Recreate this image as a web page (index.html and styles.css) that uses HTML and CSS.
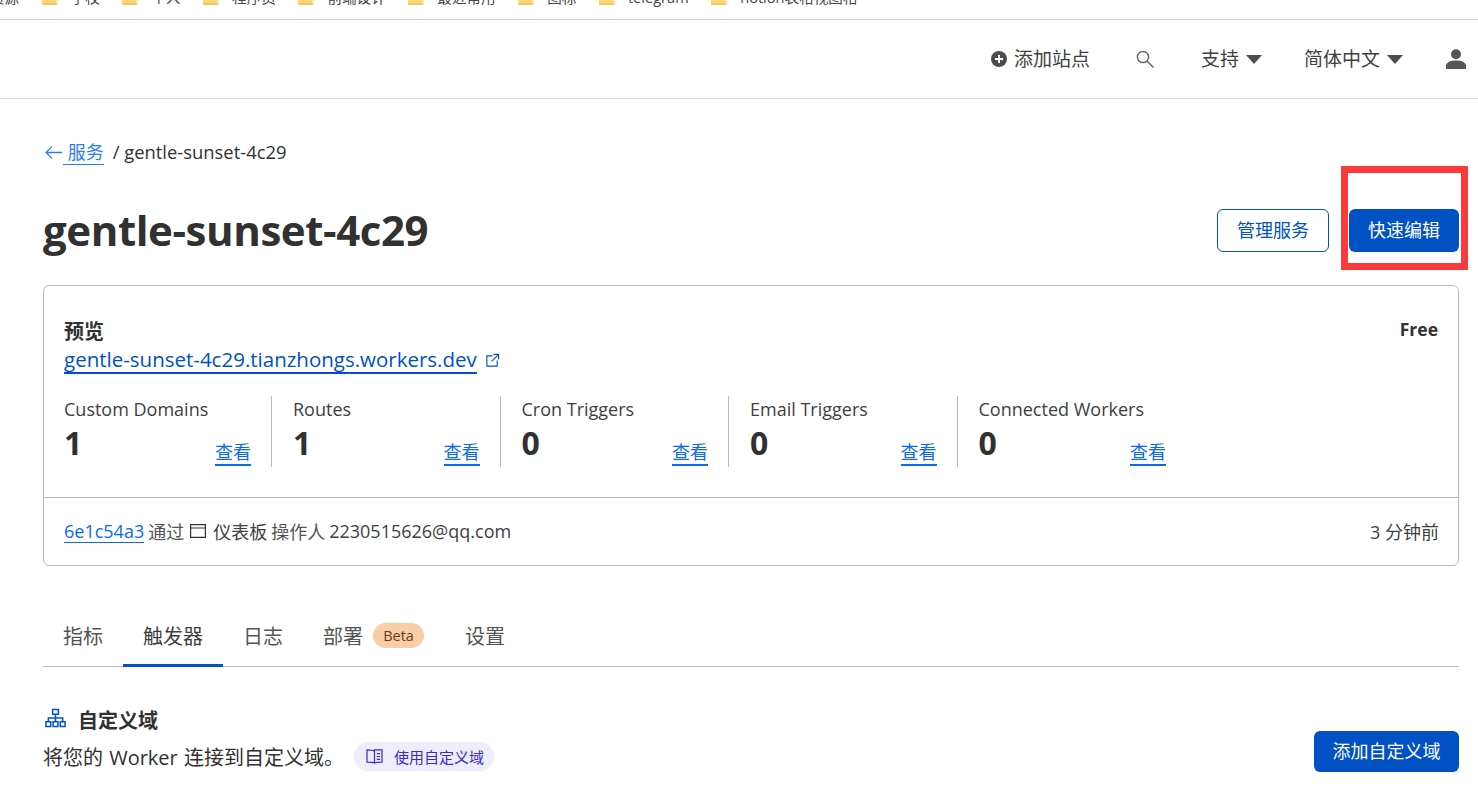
FILE: index.html
```html
<!DOCTYPE html>
<html lang="zh-CN">
<head>
<meta charset="utf-8">
<title>gentle-sunset-4c29</title>
<link rel="stylesheet" href="styles.css">
</head>
<body>
<div class="bookmarks">
  <span class="bm-lead">资源</span>
  <span class="bm"><i class="folder"></i>学校</span>
  <span class="bm"><i class="folder"></i>个人</span>
  <span class="bm"><i class="folder"></i>程序员</span>
  <span class="bm"><i class="folder"></i>前端设计</span>
  <span class="bm"><i class="folder"></i>最近常用</span>
  <span class="bm"><i class="folder"></i>图标</span>
  <span class="bm"><i class="folder"></i>telegram</span>
  <span class="bm"><i class="folder"></i>notion表格视图格</span>
</div>
<header class="topbar">
  <span class="top-item add">
    <svg class="ic16" viewBox="0 0 16 16"><circle cx="8" cy="8" r="8" fill="#4d4d4d"/><path d="M8 4v8M4 8h8" stroke="#fff" stroke-width="2"/></svg>添加站点
  </span>
  <svg class="search" viewBox="0 0 20 20" fill="none" stroke="#666" stroke-width="1.5"><circle cx="8" cy="8" r="5.6"/><path d="M12 12l6.5 6.5"/></svg>
  <span class="top-item support">支持<i class="caret"></i></span>
  <span class="top-item lang">简体中文<i class="caret"></i></span>
  <svg class="user" viewBox="0 0 20 20" fill="#555"><circle cx="10" cy="5.2" r="5"/><path d="M0 20v-3c0-3.5 4-5.5 10-5.5s10 2 10 5.5v3z"/></svg>
</header>
<main class="page">
  <nav class="crumbs">
    <svg class="back" viewBox="0 0 16 12" fill="none" stroke="#2c7cf6" stroke-width="1.2"><path d="M16 6H1M6.500.5L1 6l5.500 5.500"/></svg>
    <a class="crumb-link">&nbsp;服务</a><span class="crumb-tail">/ gentle-sunset-4c29</span>
  </nav>
  <div class="title-row">
    <h1>gentle-sunset-4c29</h1>
    <div class="actions">
      <button class="btn ghost">管理服务</button>
      <button class="btn solid">快速编辑</button>
    </div>
  </div>
  <section class="card">
    <div class="card-top">
      <div class="preview-row">
        <div>
          <div class="preview-label">预览</div>
          <div class="preview-url"><a>gentle-sunset-4c29.tianzhongs.workers.dev</a>
            <svg class="ext" viewBox="0 0 16 16" fill="none" stroke="#0051c3" stroke-width="1.2"><path d="M8 3H2v11h11V8M9 1.500h5.500V7M14.500 1.500L7 9"/></svg>
          </div>
        </div>
        <strong class="plan">Free</strong>
      </div>
      <div class="stats">
        <div class="stat"><div class="stat-name">Custom Domains</div><div class="stat-line"><b>1</b><a>查看</a></div></div>
        <div class="stat"><div class="stat-name">Routes</div><div class="stat-line"><b>1</b><a>查看</a></div></div>
        <div class="stat"><div class="stat-name">Cron Triggers</div><div class="stat-line"><b>0</b><a>查看</a></div></div>
        <div class="stat"><div class="stat-name">Email Triggers</div><div class="stat-line"><b>0</b><a>查看</a></div></div>
        <div class="stat"><div class="stat-name">Connected Workers</div><div class="stat-line"><b>0</b><a>查看</a></div></div>
      </div>
    </div>
    <div class="card-foot">
      <div class="foot-left"><a class="hash">6e1c54a3</a><span class="muted">通过</span>
        <svg class="win" viewBox="0 0 16 14" fill="none" stroke="#333" stroke-width="1.2"><path d="M.6.6h14.800v12.800H.6zM.6 4h14.800"/></svg>
        <span>仪表板</span><span class="muted">操作人</span><span>2230515626@qq.com</span></div>
      <span>3 分钟前</span>
    </div>
  </section>
  <nav class="tabs">
    <span class="tab">指标</span>
    <span class="tab active">触发器</span>
    <span class="tab">日志</span>
    <span class="tab deploy">部署<em class="beta">Beta</em></span>
    <span class="tab">设置</span>
  </nav>
  <section class="domain">
    <div>
      <h2><svg class="net" viewBox="0 0 22 20" fill="none" stroke="#0051c3" stroke-width="1.6"><path d="M8 1h6v5H8zM1 14h5v5H1zM8.500 14h5v5h-5zM16 14h5v5h-5zM11 6v8M3.500 14v-4h15v4"/></svg>自定义域</h2>
      <p class="domain-desc">将您的 Worker 连接到自定义域。<span class="doc-pill"><svg class="book" viewBox="0 0 18 16" fill="none" stroke="#3b2bc9" stroke-width="1.3"><path d="M9 2.500V15M9 2.500C8 1.500 3 1 1 1v13c2 0 7 0 8 1 1-1 6-1 8-1V1H9zM11.500 5H15M11.500 8H15M11.500 11H15"/></svg>使用自定义域</span></p>
    </div>
    <button class="btn solid wide">添加自定义域</button>
  </section>
</main>
<div class="marker"></div>
</body>
</html>
```
FILE: styles.css
```css
* { box-sizing: border-box; }
html, body { height: 100%; }
body {
  margin: 0;
  height: 788px;
  overflow: hidden;
  background: #fff;
  color: #313131;
  font-family: "Open Sans", "Noto Sans", "Noto Sans CJK SC", sans-serif;
  font-size: 18px;
  position: relative;
}
a { color: #0051c3; text-decoration: none; }

.bookmarks {
  height: 20px;
  border-bottom: 1px solid #d0d0d0;
  display: flex;
  align-items: flex-end;
  gap: 22.500px;
  padding: 0 0 12px 0;
  overflow: hidden;
  font-size: 14.600px;
  line-height: 20px;
  color: #444;
  white-space: nowrap;
}
.bm-lead { margin-left: -10px; }
.bm { display: flex; align-items: flex-end; gap: 13px; }
.folder {
  width: 16px;
  height: 16px;
  margin-bottom: 2px;
  background: #fcd974;
  border-radius: 1px;
  border-right: 2px solid #f6e7b4;
  border-bottom: 2px solid #f2c85c;
}

.topbar {
  height: 79px;
  border-bottom: 1px solid #d9d9d9;
  display: flex;
  align-items: center;
  justify-content: flex-end;
  padding: 0 12px 0 0;
  color: #404040;
  font-size: 19px;
}
.top-item { display: flex; align-items: center; line-height: 26px; }
.ic16 { width: 16px; height: 16px; margin-right: 7px; }
.add { margin-right: 45px; }
.search { width: 20px; height: 20px; margin-right: 46px; }
.support { margin-right: 42px; }
.lang { margin-right: 43px; }
.caret {
  margin-left: 7px;
  width: 0;
  height: 0;
  border-left: 8px solid transparent;
  border-right: 8px solid transparent;
  border-top: 9px solid #4d4d4d;
}
.user { width: 20px; height: 20px; }

.page { padding: 0 19px 0 43px; }

.crumbs {
  margin-top: 40px;
  height: 26px;
  display: flex;
  align-items: center;
  font-size: 18px;
}
.back { width: 17px; height: 13px; margin: 0 1px 0 2px; }
.crumb-link {
  color: #2c7cf6;
  border-bottom: 1px solid #2c7cf6;
  line-height: 24px;
}
.crumb-tail { margin-left: 9px; font-size: 18.400px; padding-bottom: 2px; }

.title-row {
  margin-top: 43px;
  height: 44px;
  display: flex;
  align-items: center;
  justify-content: space-between;
}
h1 { margin: 0; font-size: 42px; letter-spacing: -.42px; line-height: 44px; font-weight: 700; color: #313131; }
.actions { display: flex; gap: 20px; }
.btn {
  font: inherit;
  height: 43px;
  width: 112px;
  border-radius: 6px;
  padding: 0 0 2px;
  cursor: pointer;
}
.ghost { background: #fff; border: 1px solid #0051c3; color: #0051c3; }
.solid { background: #0051c3; border: 0; color: #fff; width: 110px; }
.wide { width: 145px; height: 41px; margin-top: 25px; padding-bottom: 3px; }

.card {
  margin-top: 33px;
  height: 281px;
  border: 1px solid #b9b9b9;
  border-radius: 6px;
  display: flex;
  flex-direction: column;
}
.card-top {
  height: 212px;
  border-bottom: 1px solid #b9b9b9;
  padding: 31px 20px 0;
}
.preview-row { display: flex; justify-content: space-between; align-items: flex-start; }
.preview-label { font-weight: 700; line-height: 30px; font-size: 20px; }
.plan { line-height: 24px; font-size: 17.500px; }
.preview-url { display: flex; align-items: center; line-height: 32px; font-size: 20.500px; }
.preview-url a { border-bottom: 2px solid #0051c3; line-height: 25px; }
.ext { width: 15px; height: 15px; margin-left: 8px; }

.stats { display: flex; margin-top: 22px; }
.stat {
  width: 228.500px;
  height: 71px;
  padding-left: 21px;
  padding-right: 20px;
  border-right: 1px solid #b9b9b9;
}
.stat:first-child { padding-left: 0; width: 208px; }
.stat:last-child { border-right: 0; }
.stat-name { line-height: 26px; color: #404040; }
.stat-line { display: flex; justify-content: space-between; align-items: flex-start; }
.stat-line b { font-size: 32px; line-height: 42px; }
.stat-line a {
  margin-top: 18px;
  line-height: 24px;
  color: #0a6af5;
  border-bottom: 2px solid #0a6af5;
}

.card-foot {
  flex: 1;
  display: flex;
  justify-content: space-between;
  align-items: center;
  padding: 0 19px 1px 20px;
  color: #404040;
}
.foot-left { display: flex; align-items: center; gap: 4px; }
.hash { color: #0a6af5; border-bottom: 1px solid #0a6af5; line-height: 22px; }
.muted { color: #555; }
.win { width: 16px; height: 14px; margin: 0 3px 0 2px; }

.tabs {
  margin-top: 49px;
  height: 52px;
  border-bottom: 1px solid #b9b9b9;
  display: flex;
  align-items: stretch;
  color: #555;
  font-size: 20px;
}
.tab {
  padding: 0 20px 10px;
  display: flex;
  align-items: center;
}
.active { color: #404040; border-bottom: 3px solid #0051c3; margin-bottom: -1px; padding-bottom: 9px; }
.deploy { padding-right: 21px; }
.beta {
  font-style: normal;
  font-size: 14.500px;
  color: #6b3a12;
  background: #f9cda6;
  border-radius: 13px;
  line-height: 25px;
  width: 51px;
  text-align: center;
  margin-left: 10px;
}

.domain {
  display: flex;
  justify-content: space-between;
  align-items: flex-start;
  margin-top: 39px;
}
h2 {
  margin: 0;
  display: flex;
  align-items: center;
  font-size: 20px;
  line-height: 30px;
  font-weight: 700;
}
.net { width: 21px; height: 20px; margin: 0 12px 6px 2px; }
.domain-desc { margin: 0; display: flex; align-items: center; height: 40px; font-size: 20px; word-spacing: 1px; }
.doc-pill {
  display: flex;
  align-items: center;
  margin-left: 10px;
  height: 29px;
  padding: 0 10px 0 12px;
  border-radius: 15px;
  background: #efedfb;
  color: #3b2bc9;
  font-size: 15px;
}
.book { width: 17px; height: 15px; margin-right: 11px; }

.marker {
  position: absolute;
  left: 1341px;
  top: 166px;
  width: 127px;
  height: 104px;
  border: 7px solid #fb3b3b;
  pointer-events: none;
}
```
